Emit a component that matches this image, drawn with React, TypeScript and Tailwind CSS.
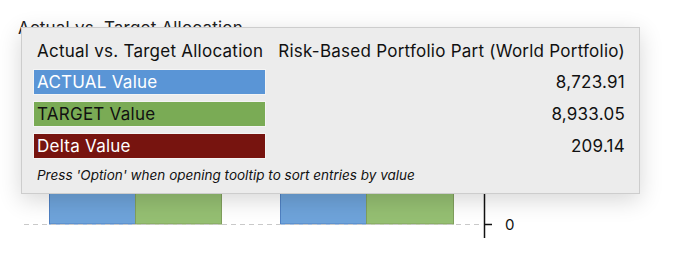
import React from 'react'

type Row = {
  label: string
  value: string
  barClass: string
}

const rows: Row[] = [
  { label: 'ACTUAL Value', value: '8,723.91', barClass: 'bg-[#5a95d6] text-white' },
  { label: 'TARGET Value', value: '8,933.05', barClass: 'bg-[#7aab55] text-[#111]' },
  { label: 'Delta Value', value: '209.14', barClass: 'bg-[#77140f] text-white' },
]

const Chart = () => (
  <svg width="690" height="230" viewBox="0 38 690 230" className="block">
    {/* bars of the chart behind the tooltip */}
    <rect x="49.5" y="150" width="86" height="74" fill="#6ea3da" stroke="#4f80c2" />
    <rect x="135.5" y="150" width="86" height="74" fill="#95bf72" stroke="#809f5d" />
    <rect x="280.5" y="150" width="86" height="74" fill="#6ea3da" stroke="#4f80c2" />
    <rect x="366.5" y="150" width="87" height="74" fill="#95bf72" stroke="#809f5d" />
    <line x1="24" y1="224.5" x2="483" y2="224.5" stroke="#c9c9c9" strokeDasharray="5 4" />
    <line x1="484.5" y1="150" x2="484.5" y2="238" stroke="#111" strokeWidth="1.5" />
    <line x1="484" y1="224.5" x2="492" y2="224.5" stroke="#111" strokeWidth="1.5" />
    <text x="505" y="229.5" fontSize="15" fill="#111" fontFamily="Inter, 'Liberation Sans', sans-serif">
      0
    </text>
  </svg>
)

export default function App() {
  return (
    <div className="relative h-[268px] w-[690px] overflow-hidden bg-white font-['Inter','Liberation_Sans',sans-serif] text-[#111]">
      <div className="h-[38px] pl-[18px] pt-[18px] text-[17px] leading-[20px] tracking-[0.2px] text-[#222]">
        Actual vs. Target Allocation
      </div>
      <Chart />

      {/* tooltip */}
      <div className="absolute left-[21px] top-[27px] w-[619px] border border-[#cdcdcd] bg-[#ececec] pb-[10px] pl-[11px] pr-[14px] pt-[13px] shadow-[0_6px_22px_rgba(0,0,0,0.16)]">
        <div className="grid grid-cols-[233px_1fr] gap-x-[9px] gap-y-[6px] text-[17px] leading-[20px] tracking-[0.25px]">
          <div className="mb-[2px] pl-[4px]">Actual vs. Target Allocation</div>
          <div className="mb-[2px] text-right">Risk-Based Portfolio Part (World Portfolio)</div>
          {rows.map((row) => (
            <React.Fragment key={row.label}>
              <div className={`flex h-[26px] items-center border border-[#f4f4f4] pl-[3px] ${row.barClass}`}>
                {row.label}
              </div>
              <div className="flex h-[26px] items-center justify-end">{row.value}</div>
            </React.Fragment>
          ))}
        </div>
        <div className="mt-[8px] pl-[4px] text-[13.5px] italic leading-[16px]">
          Press 'Option' when opening tooltip to sort entries by value
        </div>
      </div>
    </div>
  )
}
